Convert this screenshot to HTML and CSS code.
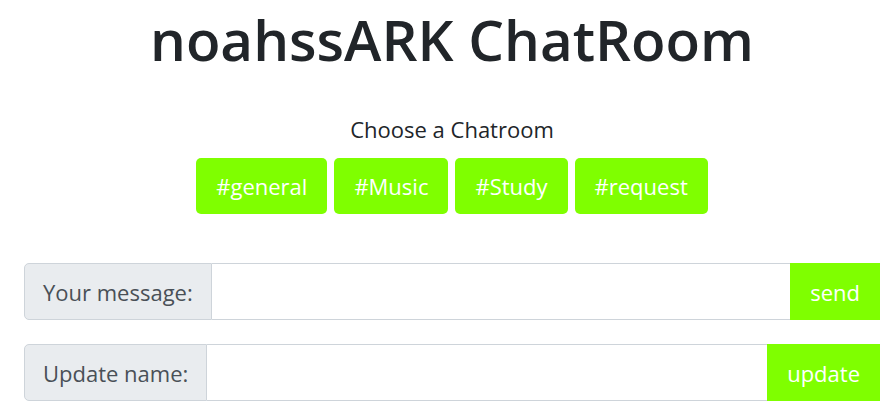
FILE: index.html
```html
<!DOCTYPE html>
<html lang="en">
<head>
<meta charset="utf-8">
<title>noahssARK ChatRoom</title>
<link rel="stylesheet" href="styles.css">
</head>
<body>
<div class="page">
  <h1 class="title">noahssARK ChatRoom</h1>
  <p class="subtitle">Choose a Chatroom</p>
  <div class="rooms">
    <button class="room">#general</button>
    <button class="room">#Music</button>
    <button class="room">#Study</button>
    <button class="room">#request</button>
  </div>
  <form class="group group-first">
    <span class="group-label">Your message:</span>
    <input class="group-input" type="text">
    <button class="group-btn" type="button">send</button>
  </form>
  <form class="group">
    <span class="group-label">Update name:</span>
    <input class="group-input" type="text">
    <button class="group-btn" type="button">update</button>
  </form>
</div>
</body>
</html>
```
FILE: styles.css
```css
html, body {
  margin: 0;
  padding: 0;
  background: #fff;
}
body {
  font-family: "Open Sans", "Noto Sans", sans-serif;
  color: #212529;
}
.page {
  width: 856px;
  margin-left: 24px;
}
.title {
  margin: 0;
  font-size: 56.5px;
  font-weight: 600;
  line-height: 1.4;
  text-align: center;
  color: #212529;
}
.subtitle {
  margin: 35px 0 0;
  font-size: 22px;
  line-height: 30px;
  text-align: center;
}
.rooms {
  display: flex;
  justify-content: center;
  gap: 7px;
  margin-top: 14px;
}
.room {
  height: 56px;
  padding: 0 20px;
  border: 0;
  border-radius: 5px;
  background: #7fff00;
  color: #fff;
  font-family: inherit;
  font-size: 22px;
}
.group {
  display: flex;
  height: 57px;
  margin: 24px 0 0;
}
.group-first {
  margin-top: 49px;
}
.group-label {
  display: flex;
  align-items: center;
  padding: 0 18px;
  background: #e9ecef;
  border: 1px solid #ced4da;
  border-radius: 5px 0 0 5px;
  color: #495057;
  font-size: 22px;
}
.group-input {
  flex: 1;
  min-width: 0;
  border: 1px solid #ced4da;
  border-left: 0;
  border-right: 0;
  margin: 0;
  padding: 0;
  outline: none;
}
.group-btn {
  padding: 0 20px;
  border: 0;
  background: #7fff00;
  color: #fff;
  font-family: inherit;
  font-size: 22px;
}
```
